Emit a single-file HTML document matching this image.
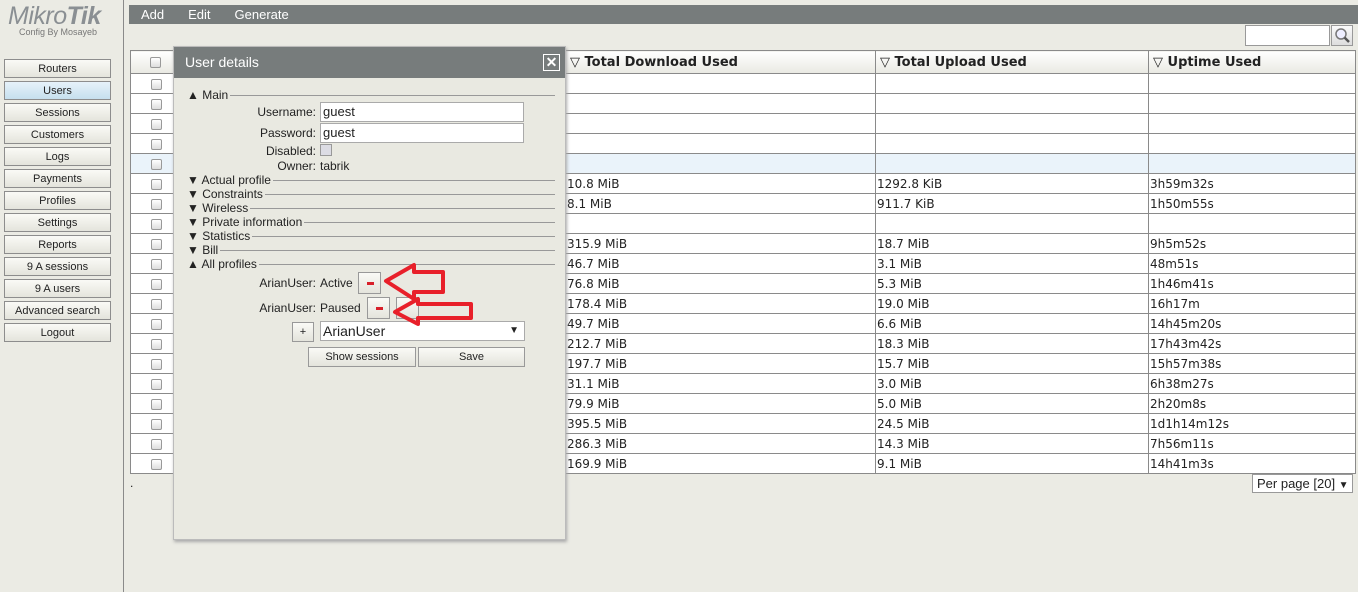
<!DOCTYPE html>
<html><head><meta charset="utf-8"><style>
*{box-sizing:border-box;margin:0;padding:0}
body{width:1358px;height:592px;overflow:hidden;background:#ebebe4;font-family:"Liberation Sans",Arial,sans-serif;font-size:12px;position:relative;color:#222}
.abs{position:absolute}
.logo{left:8px;top:2px;font-size:25px;font-style:italic;color:#8a8f93;letter-spacing:-0.5px;line-height:28px}
.logo b{font-weight:900}
.sub{left:0;width:116px;top:27px;text-align:center;font-size:9px;color:#777}
.vline{left:123px;top:0;width:1px;height:592px;background:#8a8a8a}
.btn{position:absolute;left:4px;width:107px;height:19px;border:1px solid #8d8d8d;background:linear-gradient(#fafaf6,#e4e4dc);text-align:center;font-size:11px;line-height:18px;color:#222}
.btn.sel{background:linear-gradient(#e6f2fa,#c6dfee)}
.tb{left:129px;top:5px;width:1229px;height:19px;background:#777c7c;color:#fff;font-size:13px;line-height:19px}
.tb span{margin-left:12px;margin-right:12px}
table{position:absolute;left:130px;top:50px;border-collapse:collapse;font-family:"DejaVu Sans",sans-serif;font-size:12px;background:#fff}
td,th{border:1px solid #8a8a8a;height:20px;padding:0 1px;text-align:left;white-space:nowrap;overflow:hidden}
th{height:23px;background:linear-gradient(#fff,#e9e9e2);font-weight:bold;font-size:13px;padding-left:4px}
tr.hl td{background:#eaf3fa}
.cb{display:inline-block;width:11px;height:11px;border:1px solid #999;border-radius:2px;background:linear-gradient(#fff,#ddd);margin-left:19px;vertical-align:middle}
.dlg{left:173px;top:46px;width:393px;height:494px;background:#e9e9e1;border:1px solid #bbb;box-shadow:1px 2px 3px #aaa}
.dt{position:absolute;left:0;top:0;width:100%;height:31px;background:#777c7c;color:#fff;font-size:14px;line-height:31px;padding-left:11px}
.x{position:absolute;right:5px;top:7px;width:17px;height:17px;border:1px solid #fff;color:#fff;font-size:14px;line-height:14px;text-align:center;font-weight:bold}
.sec{position:absolute;left:13px;width:368px;height:14px;font-size:12px;line-height:14px}
.sec::after{content:"";position:absolute;left:0;right:0;top:7px;border-top:1px solid #999;z-index:0}
.sec span{position:relative;z-index:1;background:#e9e9e1;padding-right:2px}
.lbl{position:absolute;text-align:right;width:142px;left:0;font-size:12px}
.inp{position:absolute;left:146px;width:204px;height:20px;background:#fff;border:1px solid #aaa;font-size:13px;line-height:18px;padding-left:2px}
.sb{position:absolute;border:1px solid #999;background:linear-gradient(#fafaf6,#e4e4dc);text-align:center;font-size:11px}
.mn{position:absolute;left:8px;top:9px;width:7px;height:3px;background:#d8202a}
</style></head><body>
<div class="abs logo">Mikro<b>Tik</b></div>
<div class="abs sub">Config By Mosayeb</div>
<div class="abs vline"></div>
<div class="btn" style="top:59px">Routers</div>
<div class="btn sel" style="top:81px">Users</div>
<div class="btn" style="top:103px">Sessions</div>
<div class="btn" style="top:125px">Customers</div>
<div class="btn" style="top:147px">Logs</div>
<div class="btn" style="top:169px">Payments</div>
<div class="btn" style="top:191px">Profiles</div>
<div class="btn" style="top:213px">Settings</div>
<div class="btn" style="top:235px">Reports</div>
<div class="btn" style="top:257px">9 A sessions</div>
<div class="btn" style="top:279px">9 A users</div>
<div class="btn" style="top:301px">Advanced search</div>
<div class="btn" style="top:323px">Logout</div>
<div class="abs tb"><span>Add</span><span>Edit</span><span>Generate</span></div>
<div class="abs" style="left:1245px;top:25px;width:85px;height:21px;background:#fff;border:1px solid #999"></div>
<div class="abs" style="left:1331px;top:25px;width:22px;height:21px;border:1px solid #999;background:linear-gradient(#fafafa,#ddd)"><svg width="20" height="19"><circle cx="9" cy="8" r="5" fill="#eef" stroke="#777" stroke-width="1.5"/><line x1="12.5" y1="11.5" x2="17" y2="16" stroke="#555" stroke-width="2.5"/></svg></div>
<table>
<colgroup><col style="width:50px"><col style="width:385px"><col style="width:310px"><col style="width:273px"><col style="width:207px"></colgroup>
<tr><th><span class="cb" style="margin-left:15px"></span></th><th></th><th>▽ Total Download Used</th><th>▽ Total Upload Used</th><th>▽ Uptime Used</th></tr>
<tr><td><span class="cb"></span></td><td></td><td></td><td></td><td></td></tr>
<tr><td><span class="cb"></span></td><td></td><td></td><td></td><td></td></tr>
<tr><td><span class="cb"></span></td><td></td><td></td><td></td><td></td></tr>
<tr><td><span class="cb"></span></td><td></td><td></td><td></td><td></td></tr>
<tr class="hl"><td><span class="cb"></span></td><td></td><td></td><td></td><td></td></tr>
<tr><td><span class="cb"></span></td><td></td><td>10.8 MiB</td><td>1292.8 KiB</td><td>3h59m32s</td></tr>
<tr><td><span class="cb"></span></td><td></td><td>8.1 MiB</td><td>911.7 KiB</td><td>1h50m55s</td></tr>
<tr><td><span class="cb"></span></td><td></td><td></td><td></td><td></td></tr>
<tr><td><span class="cb"></span></td><td></td><td>315.9 MiB</td><td>18.7 MiB</td><td>9h5m52s</td></tr>
<tr><td><span class="cb"></span></td><td></td><td>46.7 MiB</td><td>3.1 MiB</td><td>48m51s</td></tr>
<tr><td><span class="cb"></span></td><td></td><td>76.8 MiB</td><td>5.3 MiB</td><td>1h46m41s</td></tr>
<tr><td><span class="cb"></span></td><td></td><td>178.4 MiB</td><td>19.0 MiB</td><td>16h17m</td></tr>
<tr><td><span class="cb"></span></td><td></td><td>49.7 MiB</td><td>6.6 MiB</td><td>14h45m20s</td></tr>
<tr><td><span class="cb"></span></td><td></td><td>212.7 MiB</td><td>18.3 MiB</td><td>17h43m42s</td></tr>
<tr><td><span class="cb"></span></td><td></td><td>197.7 MiB</td><td>15.7 MiB</td><td>15h57m38s</td></tr>
<tr><td><span class="cb"></span></td><td></td><td>31.1 MiB</td><td>3.0 MiB</td><td>6h38m27s</td></tr>
<tr><td><span class="cb"></span></td><td></td><td>79.9 MiB</td><td>5.0 MiB</td><td>2h20m8s</td></tr>
<tr><td><span class="cb"></span></td><td></td><td>395.5 MiB</td><td>24.5 MiB</td><td>1d1h14m12s</td></tr>
<tr><td><span class="cb"></span></td><td></td><td>286.3 MiB</td><td>14.3 MiB</td><td>7h56m11s</td></tr>
<tr><td><span class="cb"></span></td><td></td><td>169.9 MiB</td><td>9.1 MiB</td><td>14h41m3s</td></tr>
</table>
<div class="abs" style="left:130px;top:476px">.</div>
<div class="abs" style="left:1252px;top:474px;width:101px;height:19px;background:#fff;border:1px solid #999;font-size:13px;line-height:17px;padding-left:4px">Per page [20] <span style="font-size:10px">▼</span></div>

<div class="abs dlg">
<div class="dt">User details<div class="x">✕</div></div>
<div class="sec" style="top:41px"><span>▲ Main</span></div>
<div class="lbl" style="top:58px">Username:</div><div class="inp" style="top:55px">guest</div>
<div class="lbl" style="top:79px">Password:</div><div class="inp" style="top:76px">guest</div>
<div class="lbl" style="top:97px">Disabled:</div><div class="abs" style="left:146px;top:97px;width:12px;height:12px;border:1px solid #999;background:#dcdce4"></div>
<div class="lbl" style="top:112px">Owner:</div><div class="abs" style="left:146px;top:112px">tabrik</div>
<div class="sec" style="top:126px"><span>▼ Actual profile</span></div>
<div class="sec" style="top:140px"><span>▼ Constraints</span></div>
<div class="sec" style="top:154px"><span>▼ Wireless</span></div>
<div class="sec" style="top:168px"><span>▼ Private information</span></div>
<div class="sec" style="top:182px"><span>▼ Statistics</span></div>
<div class="sec" style="top:196px"><span>▼ Bill</span></div>
<div class="sec" style="top:210px"><span>▲ All profiles</span></div>
<div class="lbl" style="top:229px">ArianUser:</div><div class="abs" style="left:146px;top:229px">Active</div>
<div class="sb" style="left:184px;top:225px;width:23px;height:22px"><div class="mn"></div></div>
<div class="lbl" style="top:254px">ArianUser:</div><div class="abs" style="left:146px;top:254px">Paused</div>
<div class="sb" style="left:193px;top:250px;width:23px;height:22px"><div class="mn"></div></div>
<div class="sb" style="left:222px;top:250px;width:23px;height:22px"></div>
<div class="sb" style="left:118px;top:275px;width:22px;height:20px;line-height:18px">+</div>
<div class="inp" style="left:146px;top:274px;width:205px;height:20px;font-size:14px">ArianUser<span style="position:absolute;right:5px;font-size:10px">▼</span></div>
<div class="sb" style="left:134px;top:300px;width:108px;height:20px;line-height:18px">Show sessions</div>
<div class="sb" style="left:244px;top:300px;width:107px;height:20px;line-height:18px">Save</div>
</div>
<svg class="abs" style="left:0;top:0" width="1358" height="592">
<polygon points="386,281 414,265 414,272 443,272 443,292 414,292 414,299" fill="none" stroke="#e8202a" stroke-width="4" stroke-linejoin="round"/>
<polygon points="395,312 418,299 418,304 471,304 471,318 418,318 418,324" fill="none" stroke="#e8202a" stroke-width="4" stroke-linejoin="round"/>
</svg>
</body></html>
